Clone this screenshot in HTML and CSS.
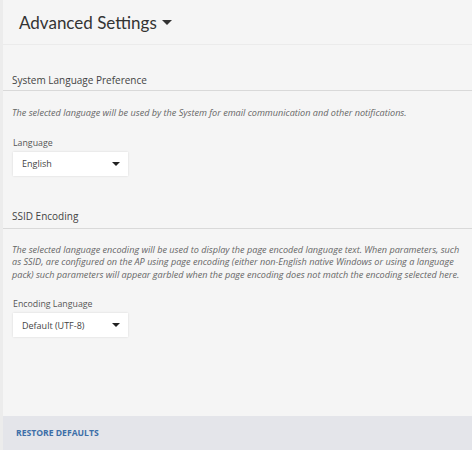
FILE: index.html
```html
<!DOCTYPE html>
<html lang="en">

<head>
    <meta charset="UTF-8" />
    <meta name="viewport" content="width=device-width, initial-scale=1" />
    <title>Advanced Settings</title>
    <link rel="stylesheet" href="styles.css">
</head>

<body>
    <main class="panel">
        <header class="panel-header">
            <h1>Advanced Settings</h1>
            <span class="caret"></span>
        </header>

        <section class="section">
            <h2 class="section-title">System Language Preference</h2>
            <p class="hint">The selected language will be used by the System for email communication and other notifications.</p>
            <label class="field-label">Language</label>
            <div class="select">
                <span>English</span>
                <span class="select-arrow"></span>
            </div>
        </section>

        <section class="section">
            <h2 class="section-title">SSID Encoding</h2>
            <p class="hint">The selected language encoding will be used to display the page encoded language text. When parameters, such as SSID, are configured on the AP using page encoding (either non-English native Windows or using a language pack) such parameters will appear garbled when the page encoding does not match the encoding selected here.</p>
            <label class="field-label">Encoding Language</label>
            <div class="select">
                <span>Default (UTF-8)</span>
                <span class="select-arrow"></span>
            </div>
        </section>

        <footer class="panel-footer">
            <button class="link-btn">RESTORE DEFAULTS</button>
        </footer>
    </main>
</body>

</html>
```

FILE: styles.css
```css
/* Reset */

* {
    margin: 0;
    padding: 0;
    box-sizing: border-box;
}

body {
    font-family: 'Open Sans', 'Liberation Sans', sans-serif;
    background: #ffffff;
    color: #444444;
    width: 474px;
    height: 452px;
    overflow: hidden;
}

.panel {
    width: 472px;
    height: 450px;
    background: #f5f5f5;
    border-left: 3px solid #ececec;
    display: flex;
    flex-direction: column;
}

.panel-header {
    height: 45px;
    display: flex;
    align-items: center;
    gap: 5px;
    padding-left: 16px;
    border-bottom: 1px solid #ebebeb;
}

h1 {
    font-family: 'Lato', sans-serif;
    font-weight: 400;
    font-size: 17px;
    color: #333333;
}

.caret {
    width: 0;
    height: 0;
    border-left: 5px solid transparent;
    border-right: 5px solid transparent;
    border-top: 5px solid #333333;
    margin-top: 1px;
}

.section {
    padding-top: 28px;
}

.section + .section {
    padding-top: 33px;
}

.section-title {
    font-weight: 400;
    font-size: 10px;
    line-height: 14px;
    color: #444444;
    padding: 0 0 3px 9px;
    border-bottom: 1px solid #d9d9d9;
}

.section + .section .section-title {
    padding-bottom: 5px;
}

.hint {
    font-style: italic;
    font-size: 9.1px;
    line-height: 12.5px;
    color: #666666;
    padding: 16px 2px 0 9px;
}

.section + .section .hint {
    padding-top: 15px;
}

.field-label {
    display: block;
    font-size: 8.8px;
    line-height: 12px;
    color: #555555;
    padding: 17px 0 0 10px;
}

.select {
    margin: 3px 0 0 10px;
    width: 115px;
    height: 24px;
    background: #ffffff;
    box-shadow: 0 0 2px rgba(0, 0, 0, 0.12);
    display: flex;
    align-items: center;
    justify-content: space-between;
    padding: 0 8px 0 9px;
    font-size: 9px;
    color: #444444;
}

.select-arrow {
    width: 0;
    height: 0;
    border-left: 4px solid transparent;
    border-right: 4px solid transparent;
    border-top: 4px solid #222222;
}

.panel-footer {
    margin-top: auto;
    height: 34px;
    background: #e4e5ea;
    display: flex;
    align-items: center;
    padding-left: 13px;
}

.link-btn {
    background: none;
    border: none;
    font-family: 'Open Sans', sans-serif;
    font-weight: 700;
    font-size: 8.6px;
    color: #3d6fa8;
    cursor: pointer;
}
```
